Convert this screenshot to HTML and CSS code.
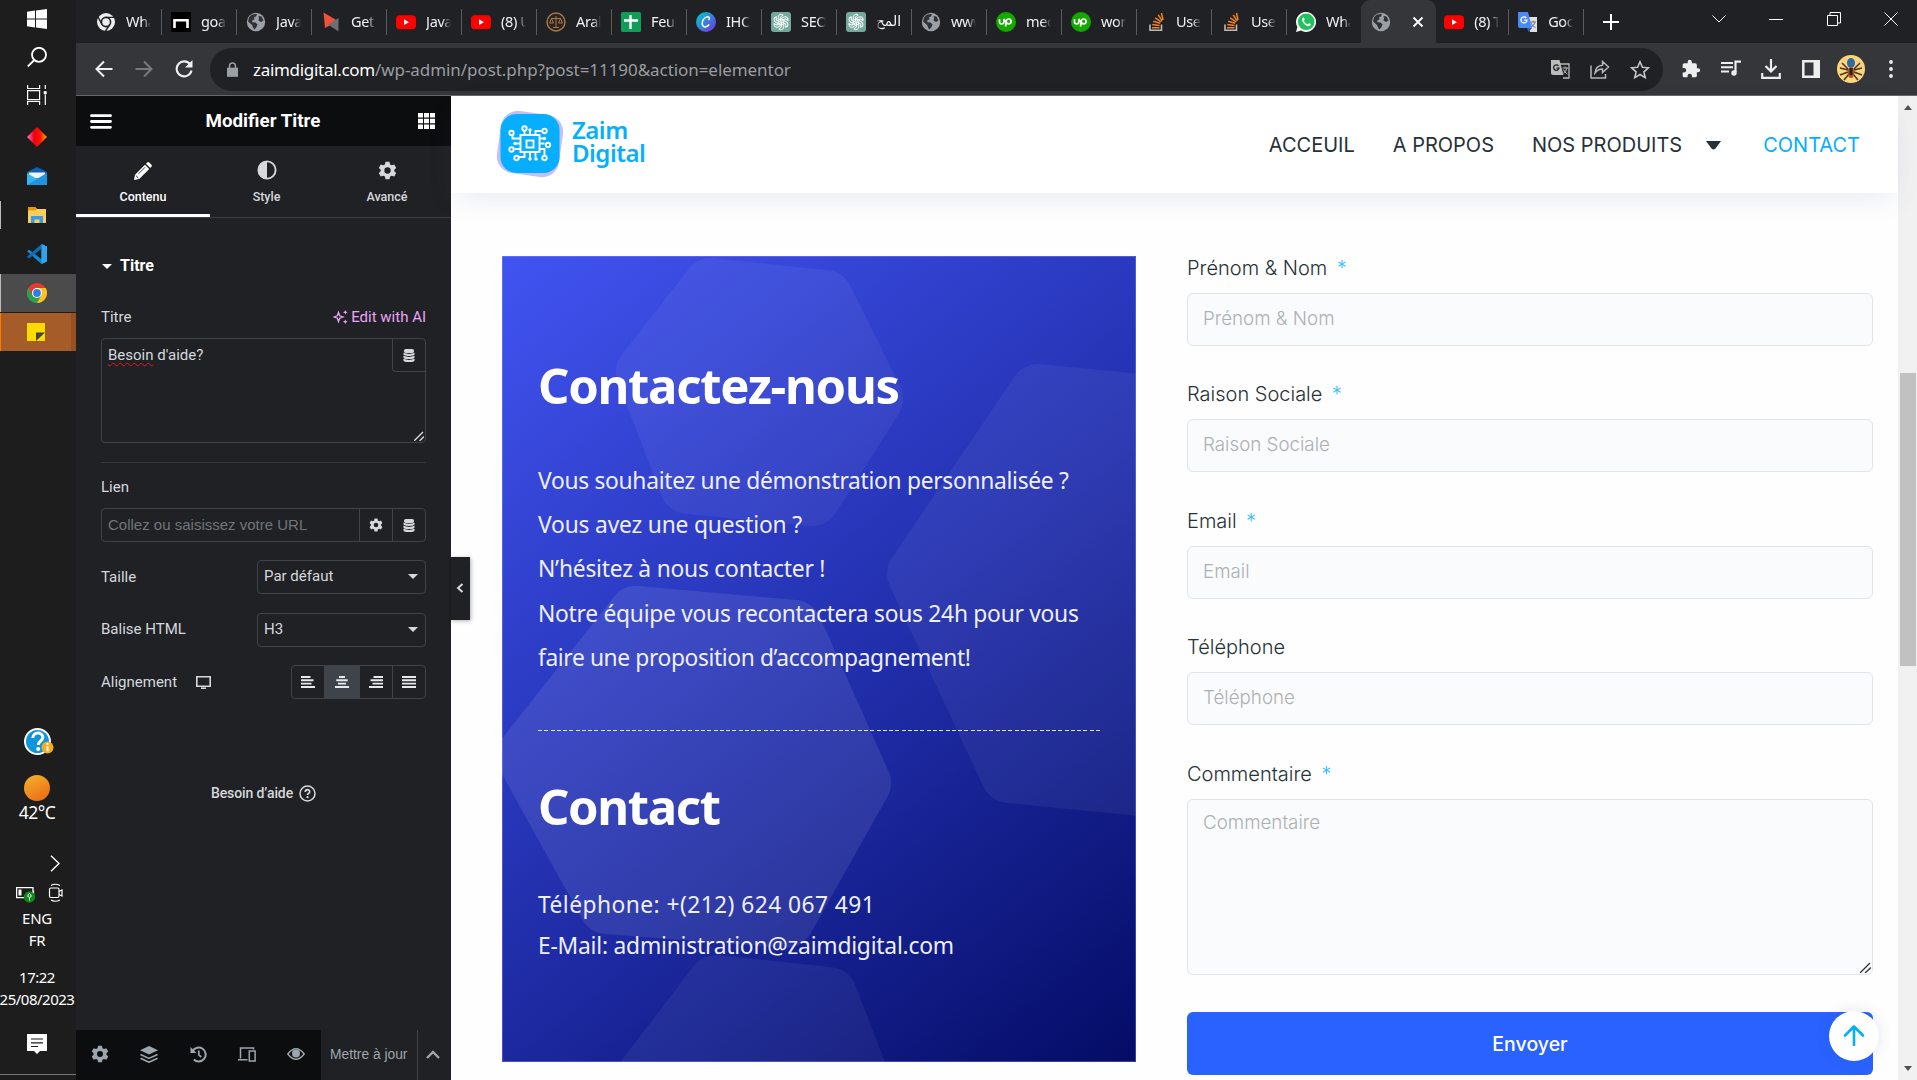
FILE: index.html
```html
<!DOCTYPE html>
<html lang="fr">
<head>
<meta charset="utf-8">
<title>Elementor</title>
<link rel="stylesheet" href="styles.css">
</head>
<body>
<svg class="defs" width="0" height="0">
  <symbol id="globe" viewBox="0 0 20 20"><circle cx="10" cy="10" r="9.2" fill="#9aa0a6"/><path d="M3 5.5c2-3 5-3.800 8-3.300l-1 2.300-2 .7.5 2-2.500 1.500.5 1.500 3 .3 2 2-1 2.500-2 2.500c-1.500-1-1.500-3-2.500-4.500L2 9.500zM12.500 4l3 .5 2 4-2.500 1.500-2.500-1.500.5-2z" fill="#303236"/></symbol>
  <symbol id="yt" viewBox="0 0 20 20"><rect y="3.200" width="20" height="14" rx="3.800" fill="#f00"/><path d="M8 7.300v5.800l5-2.900z" fill="#fff"/></symbol>
  <symbol id="gpt" viewBox="0 0 20 20"><rect width="20" height="20" rx="3" fill="#74aa9c"/><g fill="none" stroke="#fff" stroke-width="1"><path id="knot" d="M10 6.800l-2.800 1.600V5.200a2.900 2.900 0 0 1 5-2l-2.800 1.700v4.900"/><use href="#knot" transform="rotate(60 10 10)"/><use href="#knot" transform="rotate(120 10 10)"/><use href="#knot" transform="rotate(180 10 10)"/><use href="#knot" transform="rotate(240 10 10)"/><use href="#knot" transform="rotate(300 10 10)"/></g></symbol>
  <symbol id="up" viewBox="0 0 20 20"><circle cx="10" cy="10" r="10" fill="#14a800"/><path d="M3.500 7v2.800a2.200 2.200 0 0 0 4.400 0V7l1.200 2.200c.8 1.600 1.800 2.600 3.600 2.600a2.400 2.400 0 1 0-2.400-2.600L9.500 14.500" fill="none" stroke="#fff" stroke-width="1.700"/></symbol>
  <symbol id="so" viewBox="0 0 20 20"><path d="M4 12.500v5.800h11.500v-5.800" fill="none" stroke="#bcbbbb" stroke-width="1.600"/><path d="M6 15.700h7.500M6.200 12.600l7.400.8M7.200 9.300l7 2M9.200 5.800l6 4.100M12.200 2.800l4 6M15.500 1l1.500 7" stroke="#f48024" stroke-width="1.500"/></symbol>
  <symbol id="gear" viewBox="0 0 24 24"><path fill-rule="evenodd" d="M9.500 1h5l.8 3.300 2 1.100 3.200-1 2.500 4.300-2.400 2.300v2l2.400 2.300-2.500 4.300-3.200-1-2 1.100-.8 3.300h-5l-.8-3.300-2-1.100-3.200 1L1 15.300 3.400 13v-2L1 8.700l2.500-4.300 3.200 1 2-1.100zM12 8a4 4 0 1 0 0 8 4 4 0 0 0 0-8z" fill="currentColor"/></symbol>
  <symbol id="db" viewBox="0 0 12 14"><g fill="currentColor"><rect x=".5" y="0" width="11" height="4.200" rx="2.100"/><path d="M0 4q6 2.500 12 0v1.500q0 2-6 2t-6-2zM0 7.300q6 2.500 12 0v1.500q0 2-6 2t-6-2zM0 10.500q6 2.500 12 0V12q0 2-6 2t-6-2z"/></g></symbol>
</svg>

<aside class="taskbar">
  <div class="task task-start"><svg width="20" height="20" viewBox="0 0 20 20"><path d="M0 2.800l8-1.200v7.900H0zM9 1.400L20 0v9.500H9zM0 10.500h8v7.900l-8-1.200zM9 10.500h11V20L9 18.600z" fill="#fff"/></svg></div>
  <div class="task"><svg width="20" height="20" viewBox="0 0 20 20" fill="none" stroke="#fff" stroke-width="1.800"><circle cx="12" cy="7.800" r="7"/><path d="M7.300 13L.8 19.500"/></svg></div>
  <div class="task"><svg width="20" height="20" viewBox="0 0 20 20" fill="none" stroke="#fff" stroke-width="1.200"><path d="M.6 0v3.500h12V0M.6 20v-3.500h12V20M.6 5.600h12v9H.6zM18.300 0v4M18.300 9.500V20"/><path d="M16.700 6.200h3v3h-3z" fill="#fff" stroke="none"/></svg></div>
  <div class="task task-tall"><svg width="20" height="20" viewBox="0 0 20 20"><defs><linearGradient id="dia"><stop offset="0" stop-color="#f7c"/><stop offset=".35" stop-color="#e01"/><stop offset=".65" stop-color="#f10"/><stop offset="1" stop-color="#fa0"/></linearGradient></defs><path d="M10 0l10 10-10 10L0 10z" fill="url(#dia)"/></svg></div>
  <div class="task"><svg width="20" height="20" viewBox="0 0 20 20"><path d="M0 6l10-5 10 5v4H0z" fill="#0a63b8"/><path d="M2 6.500h16v6H2z" fill="#f4f4f4"/><path d="M0 7l10 6 10-6v12H0z" fill="#35b6f3"/><path d="M0 19L20 7v12z" fill="#1c93e3"/></svg></div>
  <div class="task task-run"><svg width="20" height="20" viewBox="0 0 20 20"><path d="M1 2h7l2 2h9v14H1z" fill="#f9cf5c"/><path d="M1 2h7l2 2-2 1.500H1z" fill="#e19b0c"/><path d="M4 18v-7h12v7h-3.500v-3.500h-5V18z" fill="#3c9be8"/></svg></div>
  <div class="task"><svg width="20" height="20" viewBox="0 0 20 20"><path d="M14.500 0L20 2.500v15L14.500 20 0 7.300l2-1.800 12.500 9.800z" fill="#1785cf"/><path d="M14.500 0v4.800L2 14.500l-2-1.700z" fill="#0f6cb5"/><path d="M14.500 0L20 2.500v15L14.500 20z" fill="#2ea4ef"/></svg></div>
  <div class="task task-active"><svg width="20" height="20" viewBox="0 0 20 20"><circle cx="10" cy="10" r="10" fill="#e33b2e"/><path d="M1.300 5A10 10 0 0 0 10 20l4.300-7.500H5.700z" fill="#2ba24c"/><path d="M10 20A10 10 0 0 0 18.700 5H10l4.300 7.500z" fill="#fcc31e"/><circle cx="10" cy="10" r="5" fill="#fff"/><circle cx="10" cy="10" r="3.900" fill="#2f7de9"/></svg></div>
  <div class="task task-note"><svg width="18" height="18" viewBox="0 0 18 18"><path d="M0 0h18v18H0z" fill="#fcdc00"/><path d="M9 18V9.500h9z" fill="#444"/></svg></div>
  <div class="tray">
    <svg class="help" width="30" height="28" viewBox="0 0 30 28"><circle cx="13.500" cy="13.500" r="12.500" fill="#0f95dc" stroke="#fff" stroke-width="2"/><path d="M8.800 10c0-6.500 10-6.500 10-.5 0 3.500-4.600 3.500-4.600 7.500" fill="none" stroke="#fff" stroke-width="3"/><circle cx="14.200" cy="21" r="2" fill="#fff"/><circle cx="23.500" cy="19.500" r="6" fill="#f0ae26"/><path d="M23.500 18.300v5M23.500 15v2" stroke="#fff" stroke-width="2"/></svg>
    <div class="sun"></div>
    <div class="temp">42°C</div>
    <svg class="more" width="10" height="17" viewBox="0 0 10 17"><path d="M1 .8l8 7.700-8 7.700" fill="none" stroke="#fff" stroke-width="1.400"/></svg>
    <div class="devices">
      <svg width="20" height="20" viewBox="0 0 20 20"><path d="M.6 4.600H17v10H.6zM17.500 7.500v4" fill="none" stroke="#fff" stroke-width="1.300"/><path d="M2.500 6.500h3v6h-3z" fill="#fff"/><circle cx="13.500" cy="14" r="5.700" fill="#0e8a1c"/><path d="M13.500 17.500v-3M11.800 13.500q0-2 1.700-3 1.700 1 1.700 3-1.700 2-3.400 0" fill="none" stroke="#fff"/></svg>
      <svg width="16" height="20" viewBox="0 0 16 20" fill="none" stroke="#fff" stroke-width="1.200"><rect x="1.500" y="5" width="9.500" height="9.500" rx="1.500"/><path d="M11 8.500l3-1.500v6l-3-1.500M3 2.500q4-2.500 9 0M3 17q4 2.500 9 0"/></svg>
    </div>
    <div class="lang">ENG</div>
    <div class="lang">FR</div>
    <div class="clock">17:22</div>
    <div class="date">25/08/2023</div>
    <svg class="notif" width="20" height="20" viewBox="0 0 20 20"><path d="M0 0h20v17h-7l-3 3-3-3H0z" fill="#fff"/><path d="M4 5h12M4 8.800h12M4 12.500h7" stroke="#1d1d1d" stroke-width="1.200"/></svg>
  </div>
</aside>

<div class="browser">
  <div class="strip">
    <div class="tab"><svg viewBox="0 0 20 20"><circle cx="10" cy="10" r="9" fill="#eee"/><circle cx="10" cy="10" r="4.600" fill="#eee" stroke="#202124" stroke-width="1.600"/><path d="M10 5.400h8.500M6 12.300L2 5M14 12.300L9.500 19" stroke="#202124" stroke-width="1.400"/></svg><span>Wha</span></div>
    <div class="tab"><svg viewBox="0 0 20 20"><path d="M0 0h20v20H0z"/><path d="M3.500 16V8.200h13V16" fill="none" stroke="#fff" stroke-width="2.600"/></svg><span>goa</span></div>
    <div class="tab"><svg><use href="#globe"/></svg><span>Java</span></div>
    <div class="tab"><svg viewBox="0 0 20 20"><path d="M2.500.5L17 9 4 16z" fill="#f0513a"/><path d="M17.500 6v13.500L7 12.500z" fill="#6f6f6f"/></svg><span>Get</span></div>
    <div class="tab"><svg><use href="#yt"/></svg><span>Java</span></div>
    <div class="tab"><svg><use href="#yt"/></svg><span>(8) U</span></div>
    <div class="tab"><svg viewBox="0 0 20 20" fill="none" stroke="#a87b45"><circle cx="10" cy="10" r="9" fill="#2b2320" stroke-width="1.400"/><path d="M10 4v11M5 6.500h10M3.500 11L5.500 6.500 7.500 11zM12.500 11l2-4.500 2 4.500zM7 15.500h6" stroke-width="1"/></svg><span>Aral</span></div>
    <div class="tab"><svg viewBox="0 0 20 20"><rect width="20" height="20" rx="1.500" fill="#0f9d58"/><path d="M9.500 3v14M3 8.500h14" stroke="#fff" stroke-width="2.400"/></svg><span>Feuil</span></div>
    <div class="tab"><svg viewBox="0 0 20 20"><defs><linearGradient id="cv" x2="1" y2="1"><stop offset=".1" stop-color="#00c4cc"/><stop offset="1" stop-color="#7d2ae8"/></linearGradient></defs><circle cx="10" cy="10" r="10" fill="url(#cv)"/><path d="M12.500 8c1.500-1 1-3.500-1-3.200C8 5.300 6 9 6.200 11.800c.2 4 4.500 4 7 .7" fill="none" stroke="#fff" stroke-width="1.500"/></svg><span>IHC</span></div>
    <div class="tab"><svg><use href="#gpt"/></svg><span>SEO</span></div>
    <div class="tab"><svg><use href="#gpt"/></svg><span class="rtl" dir="rtl">المح</span></div>
    <div class="tab"><svg><use href="#globe"/></svg><span>www</span></div>
    <div class="tab"><svg><use href="#up"/></svg><span>mec</span></div>
    <div class="tab"><svg><use href="#up"/></svg><span>wor</span></div>
    <div class="tab"><svg><use href="#so"/></svg><span>User</span></div>
    <div class="tab"><svg><use href="#so"/></svg><span>User</span></div>
    <div class="tab before"><svg viewBox="0 0 20 20"><path d="M0 20l1.400-5A10 10 0 1 1 5 18.600z" fill="#fff"/><circle cx="10.200" cy="9.800" r="8.300" fill="#22c15e"/><path d="M6.300 6.500c.8-1.500 1.800-1 2.300.8.300 1-1.300 1.300-.4 2.400q1.300 1.900 3 2.600c1 .3 1.200-1.200 2-1 1.500.7 2.200 1 1 2.300-2.500 2.400-9-2.500-7.900-7.100z" fill="#fff"/></svg><span>Wha</span></div>
    <div class="tab active"><svg><use href="#globe"/></svg><svg class="x" viewBox="0 0 12 12"><path d="M1.500 1.500l9 9m0-9l-9 9" stroke="#fff" stroke-width="1.800"/></svg></div>
    <div class="tab after"><svg><use href="#yt"/></svg><span>(8) T</span></div>
    <div class="tab"><svg viewBox="0 0 20 20"><path d="M8 5h11v15h-7z" fill="#dfe1e5"/><path d="M12 10h6M15 8.500V10M17 10q-1 4-4.500 5.500M13 11q1.500 3.500 4.500 4.500" stroke="#6d7a89" fill="none"/><path d="M0 0h10l4 16H2q-2 0-2-2z" fill="#4a8af4"/><path d="M9 16h5l-3.500 4z" fill="#3258c4"/><path d="M8.300 6A3 3 0 1 0 9 8.200H6" fill="none" stroke="#fff" stroke-width="1.300"/></svg><span>Goog</span></div>
    <svg class="plus" width="16" height="16" viewBox="0 0 16 16"><path d="M8 0v16M0 8h16" stroke="#fff" stroke-width="2"/></svg>
    <div class="wins">
      <svg width="14" height="14" viewBox="0 0 14 14"><path d="M.5 3.500L7 10l6.500-6.500"/></svg>
      <svg width="14" height="14" viewBox="0 0 14 14"><path d="M0 7.500h14"/></svg>
      <svg width="14" height="14" viewBox="0 0 14 14"><path d="M.5 3.500h10v10H.5zM3 3.500V.5h10.500V11h-3"/></svg>
      <svg width="14" height="14" viewBox="0 0 14 14"><path d="M.5.500l13 13m0-13l-13 13"/></svg>
    </div>
  </div>
  <div class="toolbar">
    <svg class="nav" width="18" height="18" viewBox="0 0 18 18"><path d="M17.500 9H2M9 1.500L1.500 9 9 16.500" fill="none" stroke="#eee" stroke-width="2"/></svg>
    <svg class="nav" width="18" height="18" viewBox="0 0 18 18"><path d="M.5 9H16M9 1.500L16.500 9 9 16.500" fill="none" stroke="#77797d" stroke-width="2"/></svg>
    <svg class="nav" width="18" height="18" viewBox="0 0 18 18"><path d="M15.300 4.500A7.500 7.500 0 1 0 16.500 10.500" fill="none" stroke="#eee" stroke-width="2.100"/><path d="M17.500 0v7.500H10z" fill="#eee"/></svg>
    <div class="omni">
      <svg width="11" height="15" viewBox="0 0 12 16"><path d="M0 6h12v10H0z" fill="#9aa0a6"/><path d="M2.800 7V4a3.200 3.200 0 0 1 6.400 0v3" fill="none" stroke="#9aa0a6" stroke-width="1.600"/></svg>
      <div class="url"><b>zaimdigital.com</b>/wp-admin/post.php?post=11190&amp;action=elementor</div>
      <div class="omni-icons">
        <svg width="19" height="19" viewBox="0 0 19 19"><path d="M9 4h9v14h-6" fill="none" stroke="#bbb" stroke-width="1.300"/><path d="M0 0h8.500l4 15H2q-2 0-2-2z" fill="#bbb"/><path d="M7.500 6a2.700 2.700 0 1 0 .5 2.200H5.500" fill="none" stroke="#202124" stroke-width="1.300"/><path d="M11.500 8h5.500M14 6.500V8M16 8q-1 4-3.500 5M12.500 9.500q1 3 4 4.500" fill="none" stroke="#bbb"/></svg>
        <svg width="20" height="19" viewBox="0 0 20 19" fill="none" stroke="#b5b7ba" stroke-width="1.500"><path d="M1 5.500V18h14.500v-4M5 13c.5-5 3-7.500 7.500-7.700V1.500L18.500 7l-6 5.500V9Q8 9 5 13z"/></svg>
        <svg width="20" height="19" viewBox="0 0 20 19"><path d="M10 1.800l2.400 5.500 6 .5-4.500 4 1.300 5.800-5.200-3.100-5.200 3.100 1.300-5.800-4.500-4 6-.5z" fill="none" stroke="#c4c6c9" stroke-width="1.600"/></svg>
      </div>
    </div>
    <div class="ext">
      <svg width="20" height="20" viewBox="0 0 24 24"><path d="M20.500 11H19V7a2 2 0 0 0-2-2h-4V3.500a2.500 2.500 0 0 0-5 0V5H4a2 2 0 0 0-2 2v3.800h1.500a2.700 2.700 0 0 1 0 5.400H2V20a2 2 0 0 0 2 2h3.800v-1.500a2.700 2.700 0 0 1 5.400 0V22H17a2 2 0 0 0 2-2v-4h1.500a2.500 2.500 0 0 0 0-5z" fill="#eee"/></svg>
      <svg width="20" height="20" viewBox="0 0 20 20"><path d="M0 4h12M0 8.200h12M0 12.400h8" stroke="#eee" stroke-width="2"/><path d="M20 2.700h-5.500V13" fill="none" stroke="#eee" stroke-width="2.200"/><circle cx="13" cy="14" r="2.700" fill="#eee"/></svg>
      <svg width="20" height="20" viewBox="0 0 20 20" fill="none" stroke="#eee" stroke-width="2.200"><path d="M10 0v12M4.500 7l5.500 5.500L15.500 7M1.200 14v4.800h17.600V14"/></svg>
      <svg width="18" height="18" viewBox="0 0 18 18"><path d="M1.300 1.300h15.400v15.400H1.300z" fill="none" stroke="#eee" stroke-width="2.500"/><path d="M11.500 0H18v18h-6.500z" fill="#eee"/></svg>
      <svg width="28" height="28" viewBox="0 0 28 28"><circle cx="14" cy="14" r="14" fill="#fbd47c"/><path d="M11 14L5 8M11 15l-8-2M11 17l-8 3M12 19l-5 6M17 14l6-6M17 15l8-2M17 17l8 3M16 19l5 6" stroke="#4a3526" stroke-width="1.500"/><ellipse cx="14" cy="8" rx="4" ry="5" fill="#2d6aa8"/><ellipse cx="14" cy="17.500" rx="3.500" ry="5.500" fill="#a8561b"/><path d="M12.500 13h3v7h-3z" fill="#2b211c"/></svg>
      <svg width="4" height="18" viewBox="0 0 4 18" fill="#eee"><circle cx="2" cy="2" r="1.900"/><circle cx="2" cy="9" r="1.900"/><circle cx="2" cy="16" r="1.900"/></svg>
    </div>
  </div>

  <div class="content">
    <section class="panel">
      <header class="p-head">
        <svg width="22" height="15" viewBox="0 0 22 15"><path d="M1.500 1.700h19M1.500 7.500h19M1.500 13.300h19" stroke="#fff" stroke-width="2.800" stroke-linecap="round"/></svg>
        <h1>Modifier Titre</h1>
        <svg width="17" height="16" viewBox="0 0 17 16" fill="#fff"><path d="M0 0h5v4.500H0zM6 0h5v4.500H6zM12 0h5v4.500h-5zM0 5.700h5v4.500H0zM6 5.700h5v4.500H6zM12 5.700h5v4.500h-5zM0 11.500h5V16H0zM6 11.500h5V16H6zM12 11.500h5V16h-5z"/></svg>
      </header>
      <nav class="p-tabs">
        <div class="on"><svg width="18" height="18" viewBox="0 0 18 18"><path d="M0 18l1-5.200L11 2.800 15.200 7l-10 10zM12 1.800l1.200-1.200q1-1 2 0l2.200 2.200q1 1 0 2L16.200 6z" fill="#fff"/><path d="M4.500 11.800L11 5.300M1.800 13.500l2.700 2.700" stroke="#202124" stroke-width=".9"/></svg>Contenu</div>
        <div><svg width="20" height="20" viewBox="0 0 20 20"><circle cx="10" cy="10" r="8.600" fill="none" stroke="#d5d8dc" stroke-width="1.900"/><path d="M10 1a9 9 0 0 0 0 18z" fill="#d5d8dc"/></svg>Style</div>
        <div><svg width="19" height="19"><use href="#gear"/></svg>Avancé</div>
      </nav>
      <div class="p-body">
        <h2><i class="caret"></i>Titre</h2>
        <div class="row row-title"><label>Titre</label><span class="ai"><svg width="15" height="14" viewBox="0 0 15 14"><path d="M5.500 2.500l1.200 3.300L10 7 6.700 8.200l-1.200 3.300-1.200-3.300L1 7l3.300-1.200z" fill="none" stroke="#eba3f5" stroke-width="1.300"/><path d="M12.300 0l.7 1.600 1.700.7-1.700.7-.7 1.600-.7-1.600-1.700-.7 1.700-.7zM12.300 9.400l.7 1.600 1.700.7-1.700.7-.7 1.600-.7-1.600-1.700-.7 1.700-.7z" fill="#eba3f5"/></svg>Edit with AI</span></div>
        <div class="area"><div class="area-text"><u>Besoin</u> d'aide?</div><span class="sq"><svg width="12" height="13"><use href="#db"/></svg></span><svg class="grip" width="10" height="10" viewBox="0 0 10 10"><path d="M0 10L9 1M5.500 10L10 5.500" stroke="#ddd" stroke-width="1.300"/></svg></div>
        <hr>
        <label class="lien">Lien</label>
        <div class="link"><span class="ph">Collez ou saisissez votre URL</span><span class="sq"><svg width="14" height="14"><use href="#gear"/></svg></span><span class="sq"><svg width="12" height="13"><use href="#db"/></svg></span></div>
        <div class="row r1"><label>Taille</label><div class="select">Par défaut<i class="caret"></i></div></div>
        <div class="row r2"><label>Balise HTML</label><div class="select">H3<i class="caret"></i></div></div>
        <div class="row r3"><label>Alignement</label><svg class="desk" width="15" height="13" viewBox="0 0 15 13"><path d="M.8.800h13.400v9.400H.8z" fill="none" stroke="#d5d8dc" stroke-width="1.600"/><path d="M5 12.200h5" stroke="#d5d8dc" stroke-width="1.600"/></svg>
          <div class="aligns">
            <span><svg width="14" height="12" viewBox="0 0 14 12"><path d="M0 1h9.500M0 4.300h12.500M0 7.600h10.500M0 11h14"/></svg></span>
            <span class="sel"><svg width="14" height="12" viewBox="0 0 14 12"><path d="M4 1h6M1.300 4.300h11.400M3 7.600h8M0 11h14"/></svg></span>
            <span><svg width="14" height="12" viewBox="0 0 14 12"><path d="M4.500 1H14M1.500 4.300H14M3.500 7.600H14M0 11h14"/></svg></span>
            <span><svg width="14" height="12" viewBox="0 0 14 12"><path d="M0 1h14M0 4.300h14M0 7.600h14M0 11h14"/></svg></span>
          </div>
        </div>
        <div class="need">Besoin d’aide<svg width="17" height="17" viewBox="0 0 17 17"><circle cx="8.500" cy="8.500" r="7.500" fill="none" stroke="#d5d8dc" stroke-width="1.500"/><path d="M6.300 7c0-3 4.400-3 4.400-.3C10.700 8.400 8.500 8.300 8.500 10" fill="none" stroke="#d5d8dc" stroke-width="1.700"/><circle cx="8.500" cy="12.200" r="1.100" fill="#d5d8dc"/></svg></div>
      </div>
      <footer class="p-foot">
        <div class="tools">
          <svg width="18" height="18"><use href="#gear"/></svg>
          <svg width="18" height="17" viewBox="0 0 18 17"><path d="M9 0l9 4.300-9 4.200-9-4.200z" fill="currentColor"/><path d="M.5 8.500L9 12.400l8.500-3.900M.5 12.300L9 16.200l8.500-3.900" fill="none" stroke="currentColor" stroke-width="1.700"/></svg>
          <svg width="17" height="17" viewBox="0 0 17 17" fill="none" stroke="currentColor"><path d="M2.600 5A7 7 0 1 1 3.800 13.500" stroke-width="2"/><path d="M8.800 4.500v4.300l2.500 2.200" stroke-width="1.700"/><path d="M.5 1v6h6z" fill="currentColor" stroke="none"/></svg>
          <svg width="18" height="15" viewBox="0 0 18 15" fill="none" stroke="currentColor" stroke-width="1.500"><path d="M15.500 2.500V1H2.500v10.500M0 12.800h9.500M11.300 4h5.800v10h-5.800z"/></svg>
          <svg width="18" height="12" viewBox="0 0 18 12"><path d="M.8 6Q9-4.500 17.200 6 9 16.500.8 6z" fill="none" stroke="currentColor" stroke-width="1.400"/><circle cx="9" cy="5.600" r="4" fill="currentColor"/></svg>
        </div>
        <div class="update">Mettre à jour</div>
        <div class="upmore"><svg width="14" height="9" viewBox="0 0 14 9"><path d="M1 8l6-6 6 6" fill="none" stroke="currentColor" stroke-width="2.400"/></svg></div>
      </footer>
    </section>

    <main class="site">
      <header class="s-head">
        <div class="brand">
          <svg width="68" height="68" viewBox="0 0 68 68"><rect x="2.700" y="2.700" width="62.600" height="62.600" rx="17" transform="rotate(8 34 34)" fill="#c5bff8"/><rect x="4.500" y="4" width="59" height="59" rx="16" fill="#05aeff"/><g fill="none" stroke="#fff" stroke-width="1.900"><rect x="24.500" y="25" width="19" height="17"/><rect x="30.500" y="30.500" width="7" height="7"/><path d="M28.500 25v-4.500M34 25v-5M39.500 25v-4h6M28.500 42v5h-6M34 42v6.500M39.500 42v5.500M24.500 28.500h-8v-4M24.500 33.500H19M24.500 39h-6M43.500 28.500h5M43.500 33.500h5M43.500 39h5v6"/><circle cx="28.500" cy="18.500" r="2.200"/><circle cx="48.500" cy="21" r="2.200"/><circle cx="15.500" cy="23" r="2.200"/><circle cx="15.500" cy="39.500" r="2.200"/><circle cx="20.500" cy="48" r="2.200"/><circle cx="48.500" cy="48" r="2.200"/><circle cx="52" cy="35" r="2.200"/></g><g fill="#fff"><circle cx="34" cy="20" r="1.700"/><circle cx="34" cy="49" r="1.700"/><circle cx="40" cy="49" r="1.700"/><circle cx="19" cy="33.500" r="1.700"/><circle cx="48.500" cy="28.500" r="1.700"/></g></svg>
          <div class="brand-name"><span>Zaim</span><span>Digital</span></div>
        </div>
        <nav class="menu"><a class="m1">ACCEUIL</a><a class="m2">A PROPOS</a><a class="m3">NOS PRODUITS<svg width="15" height="9" viewBox="0 0 15 9"><path d="M0 0h15L9.500 7.500q-2 2-4 0z" fill="#263238"/></svg></a><a class="m4">CONTACT</a></nav>
      </header>
      <div class="cols">
        <article class="card">
          <svg class="shapes" width="634" height="806" viewBox="0 0 634 806">
            <g opacity=".05" fill="#fff" stroke="#fff" stroke-width="56" stroke-linejoin="round">
              <path d="M209 30L323 42 373 143 310 242 186 230 142 116z"/>
            </g>
            <g opacity=".05" fill="#fff" stroke="#fff" stroke-width="56" stroke-linejoin="round">
              <path d="M536 136L680 150 760 400 700 538 507 519 413 318z"/>
            </g>
            <g opacity=".085" fill="#fff" stroke="#fff" stroke-width="56" stroke-linejoin="round">
              <path d="M134 358L292 372 361 527 284 664 105 650 22 500z"/>
            </g>
            <g opacity=".05" fill="#fff" stroke="#fff" stroke-width="56" stroke-linejoin="round">
              <path d="M214 727L327 739 370 850 120 850z"/>
            </g>
          </svg>
          <h3 class="t-a">Contactez-nous</h3>
          <p class="l1">Vous souhaitez une démonstration personnalisée ?</p>
          <p class="l2">Vous avez une question ?</p>
          <p class="l3">N’hésitez à nous contacter !</p>
          <p class="l4">Notre équipe vous recontactera sous 24h pour vous</p>
          <p class="l5">faire une proposition d’accompagnement!</p>
          <div class="dash"></div>
          <h3 class="t-b">Contact</h3>
          <p class="l6">Téléphone: +(212) 624 067 491</p>
          <p class="l7">E-Mail: administration@zaimdigital.com</p>
        </article>
        <form class="form">
          <div class="field"><label>Prénom &amp; Nom <em>*</em></label><div class="input">Prénom &amp; Nom</div></div>
          <div class="field"><label>Raison Sociale <em>*</em></label><div class="input">Raison Sociale</div></div>
          <div class="field"><label>Email <em>*</em></label><div class="input">Email</div></div>
          <div class="field"><label>Téléphone</label><div class="input">Téléphone</div></div>
          <div class="field big"><label>Commentaire <em>*</em></label><div class="input tall">Commentaire<svg class="grip" width="11" height="11" viewBox="0 0 11 11"><path d="M0 11L10 1M5 11L11 5.500" stroke="#333" stroke-width="1.300"/></svg></div></div>
          <div class="send">Envoyer<span class="totop"><svg width="22" height="21" viewBox="0 0 22 21"><path d="M11 20V2M2 10.500L11 1.500l9 9" fill="none" stroke="#05aeff" stroke-width="2.600" stroke-linecap="round" stroke-linejoin="round"/></svg></span></div>
        </form>
      </div>
      <div class="toggle"><svg width="8" height="10" viewBox="0 0 8 10"><path d="M6.500 1L2 5l4.500 4" fill="none" stroke="#ddd" stroke-width="1.900"/></svg></div>
    </main>
    <div class="scroll"><i class="up"></i><div class="thumb"></div><i class="down"></i></div>
  </div>
</div>
</body>
</html>
```
FILE: styles.css
```css
* { box-sizing: border-box; }
body { margin: 0; width: 1917px; height: 1080px; overflow: hidden; display: flex; background: #fff; font-family: "Noto Sans", sans-serif; }
svg { display: block; flex: none; }
.defs { position: absolute; }
h1, h2, h3, p { margin: 0; }

/* Windows taskbar */
.taskbar { width: 76px; background: #1d1d1d; color: #fff; display: flex; flex-direction: column; flex: none; overflow: hidden; }
.task { height: 39px; display: flex; align-items: center; justify-content: center; padding-right: 2px; flex: none; }
.task-start { height: 38px; }
.task:nth-child(2), .task:nth-child(3) { height: 38px; }
.task-tall { height: 42px; padding-top: 3px; }
.task-run { border-left: 1px solid #bbb; height: 28px; margin: 6px 0 5px; padding-right: 3px; }
.task-active { background: #4b4b4b; border-left: 1px solid #bbb; height: 38px; padding-right: 3px; margin-top: 1px; }
.task-note { background: #a55c28; border-left: 1px solid #ff7a00; border-right: 5px solid #97501f; height: 38px; margin-top: 1px; padding: 0; }
.tray { flex: 1; margin-top: 377px; display: flex; flex-direction: column; align-items: center; padding-right: 2px; }
.help { margin-left: 3px; }
.sun { width: 26px; height: 26px; border-radius: 50%; background: linear-gradient(150deg, #f2b52c, #ee6410); margin-top: 19px; }
.temp { font-size: 17.500px; line-height: 22px; letter-spacing: -0.5px; }
.more { margin: 32px 0 0 36px; }
.devices { display: flex; gap: 12px; margin: 11px 0 0 5px; }
.lang { font-size: 15px; line-height: 22px; letter-spacing: -0.3px; }
.devices + .lang { margin-top: 4px; }
.clock { font-size: 15px; line-height: 22px; margin-top: 15px; letter-spacing: -0.5px; }
.date { font-size: 15px; line-height: 22px; letter-spacing: -0.5px; white-space: nowrap; }
.notif { margin-top: 24px; }
.taskbar::after { content: ""; height: 1px; background: #777; margin-bottom: 5px; }

/* Browser chrome */
.browser { flex: 1; display: flex; flex-direction: column; min-width: 0; }
.strip { height: 43px; background: #202124; display: flex; padding-left: 10.600px; align-items: center; flex: none; }
.tab { width: 75px; height: 26px; border-right: 1px solid #5a5b5e; display: flex; align-items: center; padding-left: 9.500px; gap: 10px; color: #f1f1f1; font-size: 14.500px; letter-spacing: -0.4px; flex: none; }
.tab > svg { width: 20px; height: 20px; }
.tab span { width: 25px; overflow: hidden; white-space: nowrap; line-height: 24px; height: 26px; -webkit-mask-image: linear-gradient(90deg, #000 65%, transparent); mask-image: linear-gradient(90deg, #000 65%, transparent); }
.tab .rtl { -webkit-mask-image: linear-gradient(270deg, #000 80%, transparent); mask-image: linear-gradient(270deg, #000 80%, transparent); font-family: "DejaVu Sans", sans-serif; font-size: 14px; letter-spacing: 0; }
.tab.before, .tab.active { border-right-color: transparent; }
.tab.before { width: 74px; }
.tab.active { width: 75.600px; height: 43px; background: #35363a; border: 0; border-radius: 9px 9px 0 0; padding-left: 10px; gap: 21px; }
.tab.after { width: 72.500px; padding-left: 8px; }
.tab .x { width: 12px; height: 12px; }
.plus { margin-left: 19px; }
.wins { display: flex; gap: 43.500px; margin: -6px 0 0 93px; }
.wins path { fill: none; stroke: #fff; stroke-width: 1; }
.toolbar { height: 53px; background: #35363a; border-bottom: 1px solid #66676b; display: flex; align-items: center; padding-left: 19px; flex: none; }
.nav { margin-right: 22px; }
.nav + .nav + .nav { margin-right: 17px; }
.omni { width: 1453px; height: 43px; border-radius: 22px; background: #202124; display: flex; align-items: center; padding: 0 13px 0 17px; }
.url { margin-left: 15px; font-size: 17px; color: #9a9da1; letter-spacing: -0.06px; white-space: nowrap; flex: 1; }
.url b { font-weight: 400; color: #fff; letter-spacing: -0.3px; }
.omni-icons { display: flex; gap: 20px; }
.ext { display: flex; align-items: center; margin-left: 18px; gap: 20px; }
.ext svg:nth-child(4) { margin-left: 1px; }
.ext svg:nth-child(5) { margin-left: -3px; }
.ext svg:nth-child(6) { margin-left: 4px; }
.content { flex: 1; display: flex; min-height: 0; }

/* Editor panel */
.panel { width: 375px; background: #202124; color: #d5d8dc; font-family: Roboto, sans-serif; font-size: 15px; display: flex; flex-direction: column; flex: none; }
.p-head { height: 50px; background: #0c0d0e; display: flex; align-items: center; justify-content: space-between; padding: 0 16px 0 14px; flex: none; }
.p-head h1 { font-size: 18.750px; line-height: 50px; color: #fff; font-weight: 700; margin-right: 4px; }
.p-tabs { height: 72px; display: grid; grid-template-columns: 134px 113px 128px; border-bottom: 1px solid #3a3d42; flex: none; font-size: 12.500px; font-weight: 500; }
.p-tabs div { display: flex; flex-direction: column; align-items: center; justify-content: flex-end; gap: 8px; line-height: 18px; padding-bottom: 11px; }
.p-tabs .on { color: #fff; border-bottom: 3px solid #fff; padding-bottom: 8px; }
.p-body { flex: 1; padding: 0 25px; }
.p-body h2 { font-size: 16px; line-height: 20px; color: #fff; margin-top: 38px; display: flex; align-items: center; gap: 8px; padding-left: 1px; }
.caret { border: 5.500px solid transparent; border-top-color: currentColor; border-bottom: 0; width: 0; height: 0; }
.row { display: flex; align-items: center; }
.row-title { margin-top: 31px; height: 20px; justify-content: space-between; }
.ai { color: #eba3f5; display: flex; align-items: center; gap: 3px; }
.area { height: 105px; margin-top: 11px; border: 1px solid #3f444b; border-radius: 4px; display: flex; justify-content: space-between; position: relative; }
.area-text { padding: 7px 6px; line-height: 18px; }
.area u { text-decoration: underline wavy #e01b1b 1.300px; text-underline-offset: 2px; text-decoration-skip-ink: none; }
.sq { width: 33px; display: flex; align-items: center; justify-content: center; border-left: 1px solid #3f444b; }
.area .sq { height: 33px; border-bottom: 1px solid #3f444b; border-radius: 0 0 0 4px; }
.grip { position: absolute; right: 1px; bottom: 1px; }
hr { border: 0; border-top: 1px solid #34373c; margin: 19px 0 0; }
.lien { display: block; line-height: 20px; margin-top: 14px; }
.link { height: 34px; margin-top: 11px; border: 1px solid #3f444b; border-radius: 4px; display: flex; }
.ph { flex: 1; padding-left: 6px; line-height: 32px; color: #70757b; font-family: "Liberation Sans", sans-serif; }
.select { width: 169px; height: 34px; border: 1px solid #3f444b; border-radius: 4px; display: flex; align-items: center; justify-content: space-between; padding: 0 7px 2px 6px; margin-left: auto; }
.r1 { margin-top: 18px; }
.r2 { margin-top: 19px; }
.r2 label { padding-bottom: 3px; }
.r3 { margin-top: 18px; }
.desk { margin-left: 19px; }
.aligns { display: grid; grid-template-columns: 33px 35px 33px 32px; width: 135px; height: 34px; border: 1px solid #3f444b; border-radius: 4px; margin-left: auto; }
.aligns span { display: flex; align-items: center; justify-content: center; border-right: 1px solid #3f444b; }
.aligns span:last-child { border: 0; }
.aligns path { stroke: #e6e9ec; stroke-width: 1.900; }
.aligns .sel { background: #3f444b; }
.need { display: flex; align-items: center; justify-content: center; gap: 6px; margin-top: 84px; font-size: 14px; font-weight: 500; line-height: 20px; letter-spacing: -0.1px; }
.p-foot { height: 50px; display: flex; flex: none; color: #9da5ae; }
.tools { width: 245px; background: #0c0d0e; display: flex; align-items: center; justify-content: space-between; padding: 0 16px 2px 15px; }
.update { width: 97px; border-right: 1px solid #3f444b; display: flex; align-items: center; padding: 0 0 2px 9px; font-size: 13.800px; font-family: "Liberation Sans", sans-serif; }
.upmore { flex: 1; display: flex; align-items: center; justify-content: center; padding: 0 3px 2px 0; }

/* Website preview */
.site { width: 1447px; position: relative; background: #fefefe; flex: none; }
.s-head { height: 97px; background: #fff; box-shadow: 0 10px 30px -6px rgba(70, 90, 150, .13); display: flex; justify-content: space-between; padding: 14px 38px 0 45px; }
.brand { display: flex; gap: 8px; }
.brand-name { color: #05aeff; font-weight: 600; font-size: 24px; padding-top: 9px; letter-spacing: -0.5px; display: flex; flex-direction: column; }
.brand-name span { height: 22.500px; line-height: 22.500px; }
.menu { display: flex; align-items: flex-start; font-family: Inter, sans-serif; font-size: 20px; line-height: 24px; color: #263238; padding-top: 23px; white-space: nowrap; }
.menu a { display: flex; align-items: center; }
.m1, .m2 { margin-right: 38px; }
.m3 { margin-right: 42px; gap: 24px; }
.m4 { color: #05aeff; }
.cols { display: flex; margin-top: 63px; padding-left: 51px; gap: 51px; }
.card { width: 634px; height: 806px; position: relative; background: linear-gradient(142deg, #4154f1 0%, #2331b0 50%, #040c66 100%); box-shadow: inset 0 0 0 1px rgba(150, 160, 255, .35); padding: 99px 36px 0; color: #eeeffa; overflow: hidden; }
.shapes { position: absolute; inset: 0; }
.card > :not(svg) { position: relative; white-space: nowrap; }
.card h3 { font-size: 49px; line-height: 60px; color: #fff; font-weight: 700; }
.card p { font-size: 22.800px; line-height: 44.400px; }
.card .t-a { letter-spacing: -1.270px; }
.card .l1 { margin-top: 43.500px; letter-spacing: -0.3px; }
.l2 { letter-spacing: -0.18px; }
.l3 { letter-spacing: -0.22px; }
.l4 { letter-spacing: -0.27px; }
.l5 { letter-spacing: -0.39px; }
.dash { height: 1px; background: repeating-linear-gradient(90deg, #dfe1f5 0 4px, transparent 4px 6.270px); margin-top: 49px; }
.card .t-b { margin-top: 45px; letter-spacing: -1.360px; }
.card .l6, .card .l7 { line-height: 41px; }
.card .l6 { margin-top: 48px; letter-spacing: 0.44px; }
.card .l7 { letter-spacing: -0.22px; }
.form { width: 686px; font-family: Inter, sans-serif; }
.field { height: 126.400px; }
.field label { display: block; font-size: 20px; font-weight: 300; line-height: 25px; color: #263238; height: 37px; }
.field em { font-style: normal; color: #05aeff; margin-left: 4px; opacity: .8; }
.input { height: 53px; border: 1px solid #dfe5ea; border-radius: 6px; background: #fafbfd; color: #adb0b3; font-size: 18.750px; font-weight: 300; line-height: 49px; padding-left: 15px; position: relative; }
.field.big { height: 250px; }
.tall { height: 176px; line-height: 45px; }
.send { height: 63px; background: #2962ff; border-radius: 6px; color: #fff; font-size: 19.500px; font-weight: 500; padding-top: 2px; display: flex; align-items: center; justify-content: center; position: relative; }
.totop { position: absolute; width: 50px; height: 50px; border-radius: 50%; background: #fff; right: -6px; top: -1px; display: flex; align-items: center; justify-content: center; box-shadow: 0 0 14px rgba(60, 80, 140, .16); }
.toggle { position: absolute; left: 0; top: 461px; width: 19px; height: 63px; background: #202124; display: flex; align-items: center; justify-content: center; padding: 0 1px 2px 0; box-shadow: 1px 1px 4px rgba(0, 0, 0, .3); }
.scroll { width: 19px; background: #f1f1f1; display: flex; flex-direction: column; align-items: center; }
.scroll i { border: 4.500px solid transparent; width: 0; height: 0; }
.up { border-top: 0 !important; border-bottom: 5px solid #505050 !important; margin-top: 9px; }
.down { border-bottom: 0 !important; border-top: 5px solid #505050 !important; margin-top: auto; margin-bottom: 9px; }
.thumb { width: 16px; height: 293px; background: #c1c1c1; margin-top: 263px; }
```
